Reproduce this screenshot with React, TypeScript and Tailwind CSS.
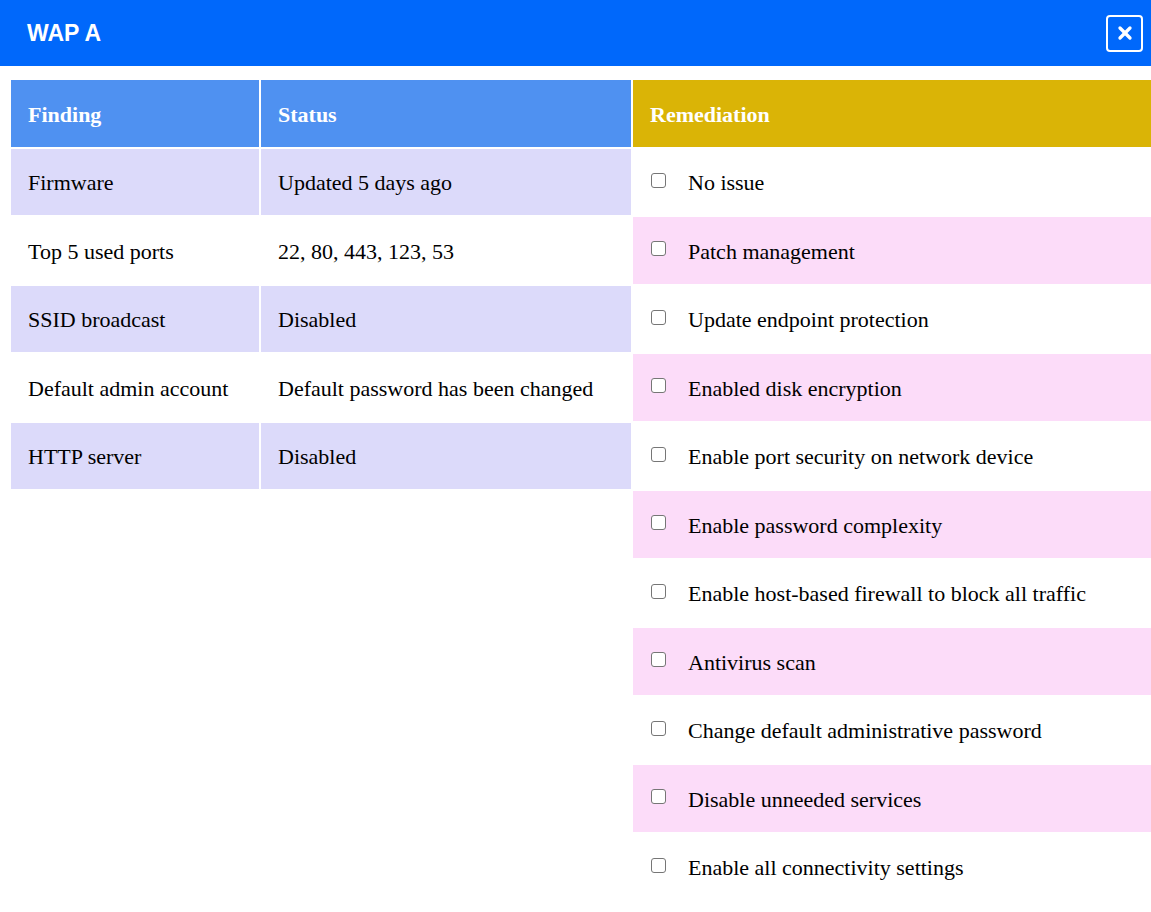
import { X } from 'lucide-react';

const findings = [
    { name: 'Firmware', status: 'Updated 5 days ago' },
    { name: 'Top 5 used ports', status: '22, 80, 443, 123, 53' },
    { name: 'SSID broadcast', status: 'Disabled' },
    { name: 'Default admin account', status: 'Default password has been changed' },
    { name: 'HTTP server', status: 'Disabled' },
];

const remediations = [
    'No issue',
    'Patch management',
    'Update endpoint protection',
    'Enabled disk encryption',
    'Enable port security on network device',
    'Enable password complexity',
    'Enable host-based firewall to block all traffic',
    'Antivirus scan',
    'Change default administrative password',
    'Disable unneeded services',
    'Enable all connectivity settings',
];

export default function App() {
    return (
        <div className="min-h-screen w-full bg-white overflow-hidden font-['Liberation_Serif',serif] text-[22px] text-black">
            {/* Title bar */}
            <div className="h-[66px] bg-[#0068fb] flex items-center justify-between pl-[27px] pr-[8px]">
                <h1 className="font-['Liberation_Sans',Arial,sans-serif] font-bold text-[23px] text-white">WAP A</h1>
                <button className="w-[37px] h-[37px] border-2 border-white rounded-[4px] flex items-center justify-center text-white">
                    <X size={20} strokeWidth={4} />
                </button>
            </div>

            <div className="flex gap-[2px] pt-[14px] pl-[11px]">
                {/* Findings table */}
                <div className="w-[620px] flex flex-col gap-[2px] shrink-0">
                    <div className="grid grid-cols-[248px_370px] gap-[2px] h-[66.5px]">
                        <div className="bg-[#4f91f1] text-white font-bold flex items-center pl-[17px] pt-[2px]">Finding</div>
                        <div className="bg-[#4f91f1] text-white font-bold flex items-center pl-[17px] pt-[2px]">Status</div>
                    </div>
                    {findings.map((f, i) => (
                        <div key={f.name} className="grid grid-cols-[248px_370px] gap-[2px] h-[66.5px]">
                            <div className={`flex items-center pl-[17px] pt-[2px] ${i % 2 === 0 ? 'bg-[#dcdafa]' : 'bg-white'}`}>{f.name}</div>
                            <div className={`flex items-center pl-[17px] pt-[2px] ${i % 2 === 0 ? 'bg-[#dcdafa]' : 'bg-white'}`}>{f.status}</div>
                        </div>
                    ))}
                </div>

                {/* Remediation options */}
                <div className="flex-1 flex flex-col gap-[2px]">
                    <div className="h-[66.5px] bg-[#dab406] text-white font-bold flex items-center pl-[17px] pt-[2px]">Remediation</div>
                    {remediations.map((r, i) => (
                        <label
                            key={r}
                            className={`h-[66.5px] flex items-center pl-[18px] gap-[22px] ${i % 2 === 1 ? 'bg-[#fcdcf9]' : 'bg-white'}`}
                        >
                            <input
                                type="checkbox"
                                className="appearance-none w-[15px] h-[15px] border border-[#767676] rounded-[3px] bg-white -mt-[3px]"
                            />
                            <span className="pt-[2px]">{r}</span>
                        </label>
                    ))}
                </div>
            </div>
        </div>
    );
}
